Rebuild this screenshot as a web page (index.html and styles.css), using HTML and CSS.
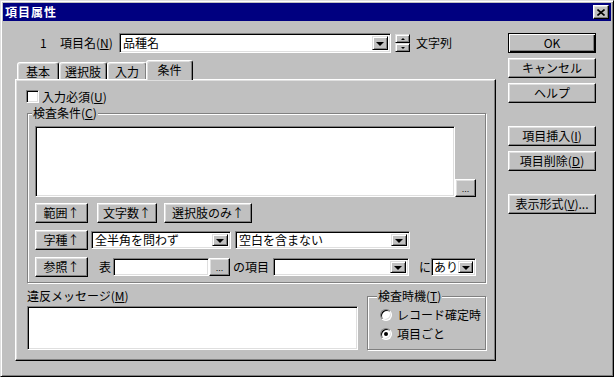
FILE: index.html
```html
<!DOCTYPE html>
<html lang="ja">
<head>
  <meta charset="UTF-8">
  <title>項目属性</title>
  <link rel="stylesheet" href="styles.css">
</head>
<body>

  <div class="window">
    <div class="titlebar">
      <span class="title">項目属性</span>
      <span class="close">
        <svg width="8" height="7" viewBox="0 0 8 7"><path d="M0.5 0.5 L7.5 6.5 M7.5 0.5 L0.5 6.5" stroke="#000" stroke-width="1.6"/></svg>
      </span>
    </div>

    <div class="client">
      <div class="main">
        <div class="name-row">
          <span class="item-no">1</span>
          <span class="name-label">項目名(<u>N</u>)</span>
          <div class="combo combo-name">
            <span class="combo-text">品種名</span>
            <span class="drop"><i class="arrow"></i></span>
          </div>
          <div class="spin">
            <span class="spin-half"><i class="tiny-up"></i></span>
            <span class="spin-half"><i class="tiny-down"></i></span>
          </div>
          <span class="type-label">文字列</span>
        </div>

        <div class="tabs">
          <span class="tab tab-basic">基本</span>
          <span class="tab tab-choice">選択肢</span>
          <span class="tab tab-input">入力</span>
          <span class="tab tab-cond active">条件</span>
        </div>

        <div class="panel">
          <div class="check-row">
            <span class="checkbox"></span>
            <span class="check-label">入力必須(<u>U</u>)</span>
          </div>

          <fieldset class="group cond-group">
            <legend>検査条件(<u>C</u>)</legend>
            <div class="cond-row">
              <div class="cond-box"></div>
              <button class="dots">...</button>
            </div>

            <div class="rule-row">
              <button class="btn rule-btn">範囲↑</button>
              <button class="btn count-btn">文字数↑</button>
              <button class="btn only-btn">選択肢のみ↑</button>
            </div>

            <div class="rule-row">
              <button class="btn rule-btn">字種↑</button>
              <div class="combo combo-width">
                <span class="combo-text">全半角を問わず</span>
                <span class="drop"><i class="arrow"></i></span>
              </div>
              <div class="combo combo-space">
                <span class="combo-text">空白を含まない</span>
                <span class="drop"><i class="arrow"></i></span>
              </div>
            </div>

            <div class="rule-row">
              <button class="btn rule-btn">参照↑</button>
              <span class="table-label">表</span>
              <div class="field table-field"></div>
              <button class="dots dots-inline">...</button>
              <span class="of-label">の項目</span>
              <div class="combo combo-item">
                <span class="combo-text"></span>
                <span class="drop"><i class="arrow"></i></span>
              </div>
              <span class="ni-label">に</span>
              <div class="combo combo-exists">
                <span class="combo-text">あり</span>
                <span class="drop"><i class="arrow"></i></span>
              </div>
            </div>
          </fieldset>

          <div class="bottom">
            <div class="msg">
              <span class="msg-label">違反メッセージ(<u>M</u>)</span>
              <div class="msg-box"></div>
            </div>
            <fieldset class="group timing-group">
              <legend>検査時機(<u>T</u>)</legend>
              <div class="radio-row">
                <span class="radio"></span>
                <span class="radio-label">レコード確定時</span>
              </div>
              <div class="radio-row">
                <span class="radio"><i class="dot"></i></span>
                <span class="radio-label">項目ごと</span>
              </div>
            </fieldset>
          </div>
        </div>
      </div>

      <div class="side">
        <button class="btn btn-default">OK</button>
        <button class="btn">キャンセル</button>
        <button class="btn">ヘルプ</button>
        <button class="btn spaced">項目挿入(<u>I</u>)</button>
        <button class="btn">項目削除(<u>D</u>)</button>
        <button class="btn spaced">表示形式(<u>V</u>)...</button>
      </div>
    </div>
  </div>

</body>
</html>
```

FILE: styles.css
```css
* {
  box-sizing: border-box;
}
body {
  margin: 0;
  background: #c0c0c0;
  font-family: "Noto Sans CJK JP", "Liberation Sans", sans-serif;
  font-size: 12px;
  line-height: 14px;
  color: #000;
}
u {
  text-decoration: underline;
  text-underline-offset: 1px;
}

/* window frame */
.window {
  width: 614px;
  height: 377px;
  background: #c0c0c0;
  border: 1px solid;
  border-color: #dfdfdf #000 #000 #dfdfdf;
  box-shadow: inset 1px 1px #fff, inset -1px -1px #808080;
  padding: 2px;
}
.titlebar {
  height: 18px;
  background: #000080;
  color: #fff;
  display: flex;
  align-items: center;
  justify-content: space-between;
  padding: 0 2px;
}
.title {
  font-weight: bold;
  font-size: 12px;
  letter-spacing: 1px;
}
.close {
  width: 16px;
  height: 14px;
  background: #c0c0c0;
  border: 1px solid;
  border-color: #fff #000 #000 #fff;
  box-shadow: inset -1px -1px #808080, inset 1px 1px #dfdfdf;
  display: flex;
  align-items: center;
  justify-content: center;
}
.close svg {
  display: block;
}

.client {
  display: flex;
  padding: 12px 0 0 12px;
}
.main {
  width: 481px;
}
.side {
  width: 88px;
  margin-left: 12px;
  display: flex;
  flex-direction: column;
  gap: 5px;
}
.side .btn {
  width: 88px;
}
.side .spaced {
  margin-top: 18px;
}

/* common controls */
.btn {
  height: 20px;
  padding: 0;
  background: #c0c0c0;
  border: 1px solid;
  border-color: #fff #000 #000 #fff;
  box-shadow: inset -1px -1px #808080, inset 1px 1px #dfdfdf;
  font: inherit;
  color: #000;
  display: flex;
  align-items: center;
  justify-content: center;
}
.btn-default {
  border-color: #000;
  box-shadow: inset 1px 1px #fff, inset -1px -1px #000, inset -2px -2px #808080;
}
.combo {
  display: flex;
  height: 18px;
  padding: 2px;
  background: #fff;
  border: 1px solid;
  border-color: #808080 #fff #fff #808080;
  box-shadow: inset 1px 1px #000, inset -1px -1px #dfdfdf;
}
.combo-text {
  flex: 1;
  padding-left: 1px;
  white-space: nowrap;
  align-self: center;
}
.drop {
  width: 16px;
  background: #c0c0c0;
  border: 1px solid;
  border-color: #dfdfdf #000 #000 #dfdfdf;
  box-shadow: inset 1px 1px #fff, inset -1px -1px #808080;
  display: flex;
  align-items: center;
  justify-content: center;
}
.arrow {
  width: 0;
  height: 0;
  border-left: 4px solid transparent;
  border-right: 4px solid transparent;
  border-top: 4px solid #000;
  margin-top: 1px;
}
.field {
  height: 18px;
  background: #fff;
  border: 1px solid;
  border-color: #808080 #fff #fff #808080;
  box-shadow: inset 1px 1px #000, inset -1px -1px #dfdfdf;
}
.dots {
  width: 21px;
  height: 18px;
  padding: 0 0 3px;
  background: #c0c0c0;
  border: 1px solid;
  border-color: #fff #000 #000 #fff;
  box-shadow: inset -1px -1px #808080, inset 1px 1px #dfdfdf;
  font: 9px "Liberation Sans", sans-serif;
  color: #000;
  display: flex;
  align-items: flex-end;
  justify-content: center;
  line-height: 8px;
}

/* name row */
.name-row {
  display: flex;
  align-items: center;
  height: 20px;
  padding-left: 25px;
}
.item-no {
  width: 20px;
}
.name-label {
  width: 59px;
}
.combo-name {
  width: 272px;
  height: 20px;
}
.spin {
  width: 15px;
  height: 18px;
  margin-left: 4px;
  display: flex;
  flex-direction: column;
}
.spin-half {
  flex: 1;
  background: #c0c0c0;
  border: 1px solid;
  border-color: #dfdfdf #000 #000 #dfdfdf;
  box-shadow: inset 1px 1px #fff, inset -1px -1px #808080;
  display: flex;
  align-items: center;
  justify-content: center;
}
.tiny-up {
  width: 0;
  height: 0;
  border-left: 2px solid transparent;
  border-right: 2px solid transparent;
  border-bottom: 2px solid #000;
}
.tiny-down {
  width: 0;
  height: 0;
  border-left: 2px solid transparent;
  border-right: 2px solid transparent;
  border-top: 2px solid #000;
}
.type-label {
  margin-left: 6px;
}

/* tabs */
.tabs {
  display: flex;
  align-items: flex-end;
  height: 19px;
  margin-top: 7px;
  padding-left: 2px;
}
.tab {
  height: 17px;
  background: #c0c0c0;
  border: 1px solid;
  border-bottom: 0;
  border-color: #fff #000 transparent #fff;
  border-radius: 3px 3px 0 0;
  box-shadow: inset -1px 0 #808080, inset 1px 1px #dfdfdf;
  display: flex;
  align-items: center;
  justify-content: center;
  padding-top: 1px;
}
.tab-basic { width: 42px; }
.tab-choice { width: 48px; }
.tab-input { width: 40px; }
.tab-cond { width: 47px; }
.tab.active {
  height: 20px;
  margin-bottom: -1px;
  margin-left: -1px;
  padding-top: 0;
  padding-bottom: 2px;
  position: relative;
  z-index: 1;
}

/* panel */
.panel {
  height: 282px;
  border: 1px solid;
  border-color: #fff #000 #000 #fff;
  box-shadow: inset -1px -1px #808080, inset 1px 1px #dfdfdf;
  padding: 0 9px 0 10px;
}
.check-row {
  display: flex;
  align-items: center;
  height: 13px;
  margin-top: 10px;
}
.checkbox {
  width: 13px;
  height: 13px;
  background: #fff;
  border: 1px solid;
  border-color: #808080 #fff #fff #808080;
  box-shadow: inset 1px 1px #000, inset -1px -1px #dfdfdf;
}
.check-label {
  margin-left: 3px;
}

.group {
  margin: 0;
  border: 1px solid #808080;
  box-shadow: inset 1px 1px #fff, 1px 1px #fff;
  min-width: 0;
}
.group legend {
  padding: 0 1px;
  margin-left: -3px;
  background: #c0c0c0;
  line-height: 14px;
}
.cond-group {
  margin-top: 3px;
  margin-left: 1px;
  padding: 6px 8px 5px 7px;
  width: 459px;
}
.cond-row {
  display: flex;
  align-items: flex-end;
}
.cond-box {
  width: 420px;
  height: 71px;
  background: #fff;
  border: 1px solid;
  border-color: #808080 #fff #fff #808080;
  box-shadow: inset 1px 1px #000, inset -1px -1px #dfdfdf;
}
.rule-row {
  display: flex;
  align-items: center;
  margin-top: 7px;
}
.cond-row + .rule-row {
  margin-top: 6px;
}
.rule-btn { width: 53px; }
.count-btn { width: 60px; margin-left: 9px; }
.only-btn { width: 88px; margin-left: 7px; }
.combo-width { width: 140px; margin-left: 3px; }
.combo-space { width: 175px; margin-left: 4px; }
.table-label { margin-left: 11px; }
.table-field { width: 96px; margin-left: 2px; }
.of-label { margin-left: 3px; }
.combo-item { width: 136px; margin-left: 4px; }
.ni-label { margin-left: 10px; }
.combo-exists { width: 45px; }
.combo-exists .combo-text { padding-left: 0; }

/* bottom area */
.bottom {
  display: flex;
  margin-top: 6px;
  padding-left: 1px;
}
.msg {
  display: flex;
  flex-direction: column;
}
.msg-box {
  width: 331px;
  height: 44px;
  margin-top: 3px;
  background: #fff;
  border: 1px solid;
  border-color: #808080 #fff #fff #808080;
  box-shadow: inset 1px 1px #000, inset -1px -1px #dfdfdf;
}
.timing-group {
  width: 119px;
  height: 61px;
  margin-left: 9px;
  padding: 4px 4px 0 12px;
}
.radio-row {
  display: flex;
  align-items: center;
  height: 16px;
  margin-bottom: 3px;
}
.radio {
  width: 12px;
  height: 12px;
  border-radius: 50%;
  background: #fff;
  border: 1px solid;
  border-color: #808080 #fff #fff #808080;
  box-shadow: inset 1px 1px #000, inset -1px -1px #dfdfdf;
  display: flex;
  align-items: center;
  justify-content: center;
}
.dot {
  width: 4px;
  height: 4px;
  border-radius: 50%;
  background: #000;
}
.radio-label {
  margin-left: 5px;
}
```
